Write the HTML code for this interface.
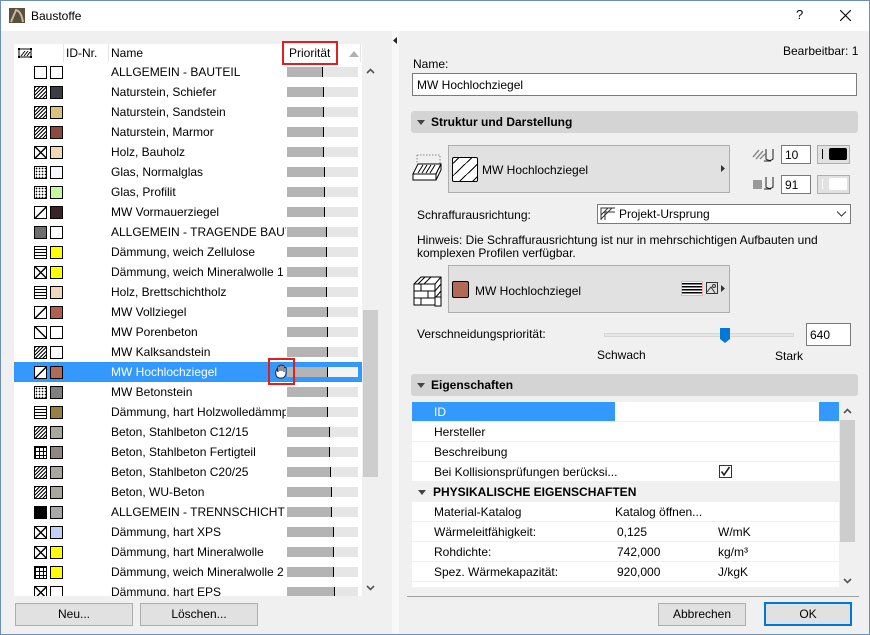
<!DOCTYPE html>
<html><head><meta charset="utf-8"><style>
*{margin:0;padding:0;box-sizing:border-box}
body{width:870px;height:635px;position:relative;overflow:hidden;background:#f0f0f0;font-family:"Liberation Sans",sans-serif;font-size:12px;color:#000}
.a{position:absolute}
.t{position:absolute;white-space:nowrap;line-height:14px}
.r{position:absolute;left:14px;width:348px;height:20px}
.r .p,.r .c{position:absolute;top:4px;width:13px;height:13px;border:1px solid #000;background:#fff}
.r .p{left:20px}.r .c{left:36px}
.r .n{position:absolute;left:97px;top:3px;width:175px;overflow:hidden;white-space:nowrap;line-height:14px}
.r .b{position:absolute;left:273px;top:5px;width:71px;height:10px;background:#e6e6e6}
.r .b i{position:absolute;left:0;top:0;height:10px;background:#b4b4b4;border-right:1px solid #000}
.d{background:repeating-linear-gradient(-45deg,#fff 0 1.6px,#000 1.6px 2.6px)!important}
.s{background:linear-gradient(to bottom right,#fff 46%,#000 46% 56%,#fff 56%)!important}
.s2{background:linear-gradient(to top right,#fff 46%,#000 46% 56%,#fff 56%)!important}
.x{background:linear-gradient(to top right,transparent 46%,#000 46% 56%,transparent 56%),linear-gradient(to bottom right,#fff 46%,#000 46% 56%,#fff 56%)!important}
.dt{background:radial-gradient(#000 0.7px,transparent 0.9px) 0 0/3px 3px,#fff!important}
.dn{background:radial-gradient(#fff 0.6px,#000 0.9px) 0 0/2px 2px!important}
.g{background:linear-gradient(#000 1px,transparent 1px) 0 0/4px 4px,linear-gradient(90deg,#000 1px,#fff 1px) 0 0/4px 4px!important}
.w{background:repeating-linear-gradient(0deg,#fff 0 2px,#000 2px 3px)!important}
.btn{position:absolute;background:#e1e1e1;border:1px solid #adadad;text-align:center;line-height:20px}
.row2{position:absolute;left:412px;width:427px;height:20px;border-bottom:1px solid #f0f0f0;background:#fff}
.row2 span{position:absolute;top:3px;white-space:nowrap;line-height:14px}
</style></head><body>
<div class="a" style="left:0;top:0;width:870px;height:635px;border:1px solid #6d8fb4"></div>
<div class="a" style="left:1px;top:1px;width:868px;height:30px;background:#fff"></div>
<svg class="a" style="left:9px;top:8px" width="16" height="15"><rect width="16" height="15" fill="#5a5040"/><path d="M2 14 L7 2 Q12 3 14 14" stroke="#c8b898" stroke-width="2" fill="none"/></svg>
<div class="t" style="left:31px;top:9px;font-size:12px">Baustoffe</div>
<div class="t" style="left:796px;top:8px;font-size:13px">?</div>
<svg class="a" style="left:840px;top:10px" width="11" height="11"><path d="M0 0L11 11M11 0L0 11" stroke="#000" stroke-width="1.1"/></svg>

<div class="a" style="left:14px;top:44px;width:348px;height:552px;background:#fff"></div>
<svg class="a" style="left:18px;top:47px" width="14" height="12"><rect x="1" y="2" width="12" height="8" fill="none" stroke="#000"/><path d="M3 9L7 4M6 9L10 4M9 9L12 5" stroke="#000"/><rect x="0" y="1" width="2" height="2"/><rect x="12" y="1" width="2" height="2"/><rect x="0" y="9" width="2" height="2"/><rect x="12" y="9" width="2" height="2"/></svg>
<div class="a" style="left:63px;top:44px;width:1px;height:18px;background:#e5e5e5"></div>
<div class="a" style="left:108px;top:44px;width:1px;height:18px;background:#e5e5e5"></div>
<div class="a" style="left:283px;top:44px;width:1px;height:18px;background:#e5e5e5"></div>
<div class="a" style="left:360px;top:44px;width:1px;height:18px;background:#e5e5e5"></div>
<div class="t" style="left:66px;top:46px">ID-Nr.</div>
<div class="t" style="left:111px;top:46px">Name</div>
<div class="t" style="left:289px;top:46px">Priorität</div>
<div class="a" style="left:282px;top:41px;width:56px;height:24px;border:2px solid #e02020"></div>
<svg class="a" style="left:349px;top:51px" width="10" height="6"><path d="M0 6L5 0L10 6Z" fill="#b0b0b0"/></svg>

<div class="r" style="top:62px"><div class="p"></div><div class="c"></div><div class="n">ALLGEMEIN - BAUTEIL</div><div class="b"><i style="width:36px"></i></div></div>
<div class="r" style="top:82px"><div class="p d"></div><div class="c" style="background:#3c3c44"></div><div class="n">Naturstein, Schiefer</div><div class="b"><i style="width:37px"></i></div></div>
<div class="r" style="top:102px"><div class="p d"></div><div class="c" style="background:#d7c27f"></div><div class="n">Naturstein, Sandstein</div><div class="b"><i style="width:37px"></i></div></div>
<div class="r" style="top:122px"><div class="p d"></div><div class="c" style="background:#8b4a3d"></div><div class="n">Naturstein, Marmor</div><div class="b"><i style="width:37px"></i></div></div>
<div class="r" style="top:142px"><div class="p x"></div><div class="c" style="background:#efd9b8"></div><div class="n">Holz, Bauholz</div><div class="b"><i style="width:37px"></i></div></div>
<div class="r" style="top:162px"><div class="p dt"></div><div class="c" style="background:#f7f7ff"></div><div class="n">Glas, Normalglas</div><div class="b"><i style="width:38px"></i></div></div>
<div class="r" style="top:182px"><div class="p dt"></div><div class="c" style="background:#c8f5a0"></div><div class="n">Glas, Profilit</div><div class="b"><i style="width:38px"></i></div></div>
<div class="r" style="top:202px"><div class="p s"></div><div class="c" style="background:#3a2228"></div><div class="n">MW Vormauerziegel</div><div class="b"><i style="width:38px"></i></div></div>
<div class="r" style="top:222px"><div class="p dn"></div><div class="c"></div><div class="n">ALLGEMEIN - TRAGENDE BAUTEILE</div><div class="b"><i style="width:40px"></i></div></div>
<div class="r" style="top:242px"><div class="p w"></div><div class="c" style="background:#ffff00"></div><div class="n">Dämmung, weich Zellulose</div><div class="b"><i style="width:40px"></i></div></div>
<div class="r" style="top:262px"><div class="p x"></div><div class="c" style="background:#ffff00"></div><div class="n">Dämmung, weich Mineralwolle 1</div><div class="b"><i style="width:40px"></i></div></div>
<div class="r" style="top:282px"><div class="p w"></div><div class="c" style="background:#efd9b8"></div><div class="n">Holz, Brettschichtholz</div><div class="b"><i style="width:40px"></i></div></div>
<div class="r" style="top:302px"><div class="p s"></div><div class="c" style="background:#b06050"></div><div class="n">MW Vollziegel</div><div class="b"><i style="width:41px"></i></div></div>
<div class="r" style="top:322px"><div class="p s2"></div><div class="c"></div><div class="n">MW Porenbeton</div><div class="b"><i style="width:41px"></i></div></div>
<div class="r" style="top:342px"><div class="p d"></div><div class="c"></div><div class="n">MW Kalksandstein</div><div class="b"><i style="width:41px"></i></div></div>
<div class="r" style="top:362px;background:#3399ff;border:1px dotted #c07020"><div class="p s" style="top:3px;left:19px"></div><div class="c" style="background:#b06a55;top:3px;left:35px"></div><div class="n" style="color:#fff;top:2px;left:96px">MW Hochlochziegel</div><div class="b" style="background:#f4f4f4;top:4px;left:272px"><i style="width:41px"></i></div></div>
<div class="a" style="left:268px;top:358px;width:27px;height:27px;border:2px solid #e02020"></div>
<svg class="a" style="left:274px;top:364px" width="15" height="15"><path d="M3 13Q1 10 2 7L3 5L4 8V2.5Q5 1.5 6 2.5V7V1.5Q7 0.5 8 1.5V7V2Q9 1 10 2V8V4Q11 3 12 4V9Q12 12 9 14H5Z" fill="#fff" stroke="#223" stroke-width="1"/></svg>
<div class="r" style="top:382px"><div class="p dt"></div><div class="c" style="background:#808080"></div><div class="n">MW Betonstein</div><div class="b"><i style="width:41px"></i></div></div>
<div class="r" style="top:402px"><div class="p w"></div><div class="c" style="background:#9a8040"></div><div class="n">Dämmung, hart Holzwolledämmpl</div><div class="b"><i style="width:41px"></i></div></div>
<div class="r" style="top:422px"><div class="p d"></div><div class="c" style="background:#a8a89c"></div><div class="n">Beton, Stahlbeton C12/15</div><div class="b"><i style="width:43px"></i></div></div>
<div class="r" style="top:442px"><div class="p g"></div><div class="c" style="background:#908880"></div><div class="n">Beton, Stahlbeton Fertigteil</div><div class="b"><i style="width:43px"></i></div></div>
<div class="r" style="top:462px"><div class="p d"></div><div class="c" style="background:#a8a89c"></div><div class="n">Beton, Stahlbeton C20/25</div><div class="b"><i style="width:44px"></i></div></div>
<div class="r" style="top:482px"><div class="p d"></div><div class="c" style="background:#a8a89c"></div><div class="n">Beton, WU-Beton</div><div class="b"><i style="width:45px"></i></div></div>
<div class="r" style="top:502px"><div class="p" style="background:#000"></div><div class="c" style="background:#a8a8a8"></div><div class="n">ALLGEMEIN - TRENNSCHICHT AUSS</div><div class="b"><i style="width:45px"></i></div></div>
<div class="r" style="top:522px"><div class="p x"></div><div class="c" style="background:#c0d0f8"></div><div class="n">Dämmung, hart XPS</div><div class="b"><i style="width:47px"></i></div></div>
<div class="r" style="top:542px"><div class="p x"></div><div class="c" style="background:#ffff00"></div><div class="n">Dämmung, hart Mineralwolle</div><div class="b"><i style="width:47px"></i></div></div>
<div class="r" style="top:562px"><div class="p g"></div><div class="c" style="background:#ffff00"></div><div class="n">Dämmung, weich Mineralwolle 2</div><div class="b"><i style="width:47px"></i></div></div>
<div class="r" style="top:582px;height:14px;overflow:hidden"><div class="p x"></div><div class="c"></div><div class="n">Dämmung, hart EPS</div><div class="b"><i style="width:48px"></i></div></div>

<div class="a" style="left:362px;top:62px;width:16px;height:534px;background:#f0f0f0"></div>
<div class="a" style="left:363px;top:310px;width:15px;height:167px;background:#cdcdcd"></div>
<svg class="a" style="left:366px;top:68px" width="9" height="6"><path d="M1 5L4.5 1.5L8 5" stroke="#555" stroke-width="1.6" fill="none"/></svg>
<svg class="a" style="left:366px;top:585px" width="9" height="6"><path d="M1 1L4.5 4.5L8 1" stroke="#555" stroke-width="1.6" fill="none"/></svg>

<div class="btn" style="left:15px;top:603px;width:118px;height:23px">Neu...</div>
<div class="btn" style="left:140px;top:603px;width:118px;height:23px">Löschen...</div>

<div class="a" style="left:392px;top:31px;width:7px;height:603px;background:#f8f8f8"></div>
<svg class="a" style="left:393px;top:37px" width="5" height="7"><path d="M4 0L0 3.5L4 7Z" fill="#222"/></svg>

<div class="t" style="left:783px;top:44px">Bearbeitbar: 1</div>
<div class="t" style="left:413px;top:57px">Name:</div>
<div class="a" style="left:412px;top:73px;width:445px;height:23px;background:#fff;border:1px solid #7a7a7a"></div>
<div class="t" style="left:417px;top:78px">MW Hochlochziegel</div>
<div class="a" style="left:411px;top:111px;width:447px;height:22px;background:#d4d4d4;border-radius:3px"></div>
<svg class="a" style="left:417px;top:120px" width="8" height="5"><path d="M0 0H8L4 5Z" fill="#444"/></svg>
<div class="t" style="left:431px;top:115px;font-weight:bold">Struktur und Darstellung</div>

<svg class="a" style="left:412px;top:150px" width="32" height="32"><path d="M5 5H28V14M5 5V14" stroke="#888" stroke-dasharray="1.5 1.5" fill="none"/><path d="M1 24L6 14H29L24 24Z" fill="#fff" stroke="#000"/><path d="M6 23L11 15M10 23L15 15M14 23L19 15M18 23L23 15" stroke="#000"/><path d="M1 24H24V30H1Z M24 24L29 14V20L24 30" fill="#fff" stroke="#000"/></svg>
<div class="a" style="left:448px;top:145px;width:282px;height:48px;background:#e1e1e1;border:1px solid #adadad"></div>
<div class="a" style="left:452px;top:157px;width:26px;height:25px;border:1px solid #000;border-radius:2px;background:linear-gradient(to bottom right,#fff 10%,#000 10% 13%,#fff 13% 37%,#000 37% 40%,#fff 40% 63%,#000 63% 66%,#fff 66% 90%,#000 90% 93%,#fff 93%)"></div>
<div class="t" style="left:482px;top:163px">MW Hochlochziegel</div>
<svg class="a" style="left:721px;top:165px" width="4" height="7"><path d="M0 0L4 3.5L0 7Z" fill="#333"/></svg>

<svg class="a" style="left:752px;top:147px" width="26" height="18"><path d="M1 10L7 3M4 12L11 4M8 12L13 7" stroke="#888" stroke-width="1.4"/><path d="M14 2V12Q18 15 21 12V2M12 14H19" stroke="#222" fill="none"/></svg>
<div class="a" style="left:781px;top:145px;width:30px;height:19px;background:#fff;border:1px solid #7a7a7a"></div>
<div class="t" style="left:785px;top:148px">10</div>
<div class="a" style="left:817px;top:145px;width:33px;height:19px;background:#e1e1e1;border:1px solid #adadad"></div>
<div class="a" style="left:822px;top:149px;width:1px;height:10px;background:#000"></div>
<div class="a" style="left:829px;top:148px;width:18px;height:12px;background:#000;border-radius:2px"></div>
<svg class="a" style="left:752px;top:175px" width="26" height="18"><rect x="1" y="5" width="9" height="9" fill="#999"/><path d="M14 2V12Q18 15 21 12V2M12 14H19" stroke="#222" fill="none"/></svg>
<div class="a" style="left:781px;top:175px;width:30px;height:19px;background:#fff;border:1px solid #7a7a7a"></div>
<div class="t" style="left:785px;top:178px">91</div>
<div class="a" style="left:817px;top:175px;width:33px;height:19px;background:#e1e1e1;border:1px solid #adadad"></div>
<div class="a" style="left:822px;top:179px;width:1px;height:10px;background:#fff"></div>
<div class="a" style="left:829px;top:178px;width:18px;height:12px;background:#fff;border-radius:2px"></div>

<div class="t" style="left:417px;top:208px">Schraffurausrichtung:</div>
<div class="a" style="left:597px;top:204px;width:254px;height:20px;background:#fff;border:1px solid #7a7a7a"></div>
<svg class="a" style="left:600px;top:207px" width="16" height="14"><path d="M1 13V1H15M1 8L8 1M1 12L12 1M5 13V5H15" stroke="#333" fill="none"/></svg>
<div class="t" style="left:619px;top:207px">Projekt-Ursprung</div>
<svg class="a" style="left:837px;top:211px" width="9" height="6"><path d="M0 0.5L4.5 5L9 0.5" stroke="#333" fill="none"/></svg>
<div class="t" style="left:417px;top:233px">Hinweis: Die Schraffurausrichtung ist nur in mehrschichtigen Aufbauten und</div>
<div class="t" style="left:417px;top:246px">komplexen Profilen verfügbar.</div>

<svg class="a" style="left:413px;top:275px" width="30" height="32"><path d="M1 9H22V30H1Z M1 9L8 2H28V23L22 30 M22 9L28 2" fill="#fff" stroke="#000"/><path d="M1 16H22M1 23H22M8 9V16M15 16V23M8 23V30M12 2L5 9M18 2L11 9M22 16L28 9M22 23L28 16" stroke="#000"/><rect x="22" y="22" width="6" height="9" fill="#fff" stroke="#000"/></svg>
<div class="a" style="left:448px;top:265px;width:282px;height:48px;background:#e1e1e1;border:1px solid #adadad"></div>
<div class="a" style="left:452px;top:281px;width:17px;height:17px;background:#b06a55;border:1px solid #000;border-radius:2px"></div>
<div class="t" style="left:475px;top:284px">MW Hochlochziegel</div>
<div class="a" style="left:681px;top:281px;width:22px;height:15px;background:repeating-linear-gradient(0deg,#fff 0 1.5px,#000 1.5px 3px);border:1px solid #f0b0b0"></div>
<svg class="a" style="left:706px;top:282px" width="12" height="12"><rect x="0.5" y="0.5" width="11" height="11" fill="none" stroke="#333"/><circle cx="8" cy="4" r="1.5" fill="none" stroke="#333"/><path d="M1 10L5 5L9 11" stroke="#333" fill="none"/></svg>
<svg class="a" style="left:721px;top:285px" width="4" height="7"><path d="M0 0L4 3.5L0 7Z" fill="#333"/></svg>

<div class="t" style="left:417px;top:327px">Verschneidungspriorität:</div>
<div class="a" style="left:604px;top:333px;width:190px;height:4px;background:#e7e7e7;border:1px solid #d6d6d6"></div>
<svg class="a" style="left:720px;top:328px" width="10" height="15"><path d="M0 0H10V11L5 15L0 11Z" fill="#0078d7"/></svg>
<div class="a" style="left:806px;top:323px;width:45px;height:23px;background:#fff;border:1px solid #7a7a7a"></div>
<div class="t" style="left:810px;top:328px">640</div>
<div class="t" style="left:597px;top:348px">Schwach</div>
<div class="t" style="left:775px;top:349px">Stark</div>

<div class="a" style="left:411px;top:374px;width:447px;height:22px;background:#d4d4d4;border-radius:3px"></div>
<svg class="a" style="left:417px;top:383px" width="8" height="5"><path d="M0 0H8L4 5Z" fill="#444"/></svg>
<div class="t" style="left:431px;top:378px;font-weight:bold">Eigenschaften</div>

<div class="a" style="left:412px;top:402px;width:443px;height:185px;background:#fff"></div>
<div class="row2" style="top:402px"><div class="a" style="left:0;top:0;width:203px;height:19px;background:#3399ff"></div><div class="a" style="left:407px;top:0;width:20px;height:19px;background:#3399ff"></div><span style="left:22px;color:#fff">ID</span></div>
<div class="row2" style="top:422px"><span style="left:22px">Hersteller</span></div>
<div class="row2" style="top:442px"><span style="left:22px">Beschreibung</span></div>
<div class="row2" style="top:462px"><span style="left:22px">Bei Kollisionsprüfungen berücksi...</span></div>
<svg class="a" style="left:719px;top:465px" width="13" height="13"><rect x="0.5" y="0.5" width="12" height="12" fill="#fff" stroke="#333"/><path d="M2.5 6.5L5 10L10.5 2" stroke="#222" stroke-width="1.6" fill="none"/></svg>
<div class="row2" style="top:481px;background:#f0f0f0;height:21px"><span style="left:21px;font-weight:bold;top:4px">PHYSIKALISCHE EIGENSCHAFTEN</span></div>
<svg class="a" style="left:418px;top:490px" width="8" height="5"><path d="M0 0H8L4 5Z" fill="#444"/></svg>
<div class="row2" style="top:502px"><span style="left:22px">Material-Katalog</span><span style="left:203px">Katalog öffnen...</span></div>
<div class="row2" style="top:522px"><span style="left:22px">Wärmeleitfähigkeit:</span><span style="left:205px">0,125</span><span style="left:306px">W/mK</span></div>
<div class="row2" style="top:542px"><span style="left:22px">Rohdichte:</span><span style="left:205px">742,000</span><span style="left:306px">kg/m³</span></div>
<div class="row2" style="top:562px"><span style="left:22px">Spez. Wärmekapazität:</span><span style="left:205px">920,000</span><span style="left:306px">J/kgK</span></div>
<div class="a" style="left:839px;top:402px;width:16px;height:185px;background:#f0f0f0"></div>
<div class="a" style="left:840px;top:420px;width:15px;height:122px;background:#cdcdcd"></div>
<svg class="a" style="left:843px;top:408px" width="9" height="6"><path d="M1 5L4.5 1.5L8 5" stroke="#555" stroke-width="1.6" fill="none"/></svg>
<svg class="a" style="left:843px;top:578px" width="9" height="6"><path d="M1 1L4.5 4.5L8 1" stroke="#555" stroke-width="1.6" fill="none"/></svg>

<div class="a" style="left:407px;top:596px;width:452px;height:1px;background:#a0a0a0"></div>
<div class="btn" style="left:658px;top:603px;width:88px;height:23px">Abbrechen</div>
<div class="btn" style="left:764px;top:602px;width:88px;height:24px;border:2px solid #0078d7;line-height:20px">OK</div>
</body></html>
